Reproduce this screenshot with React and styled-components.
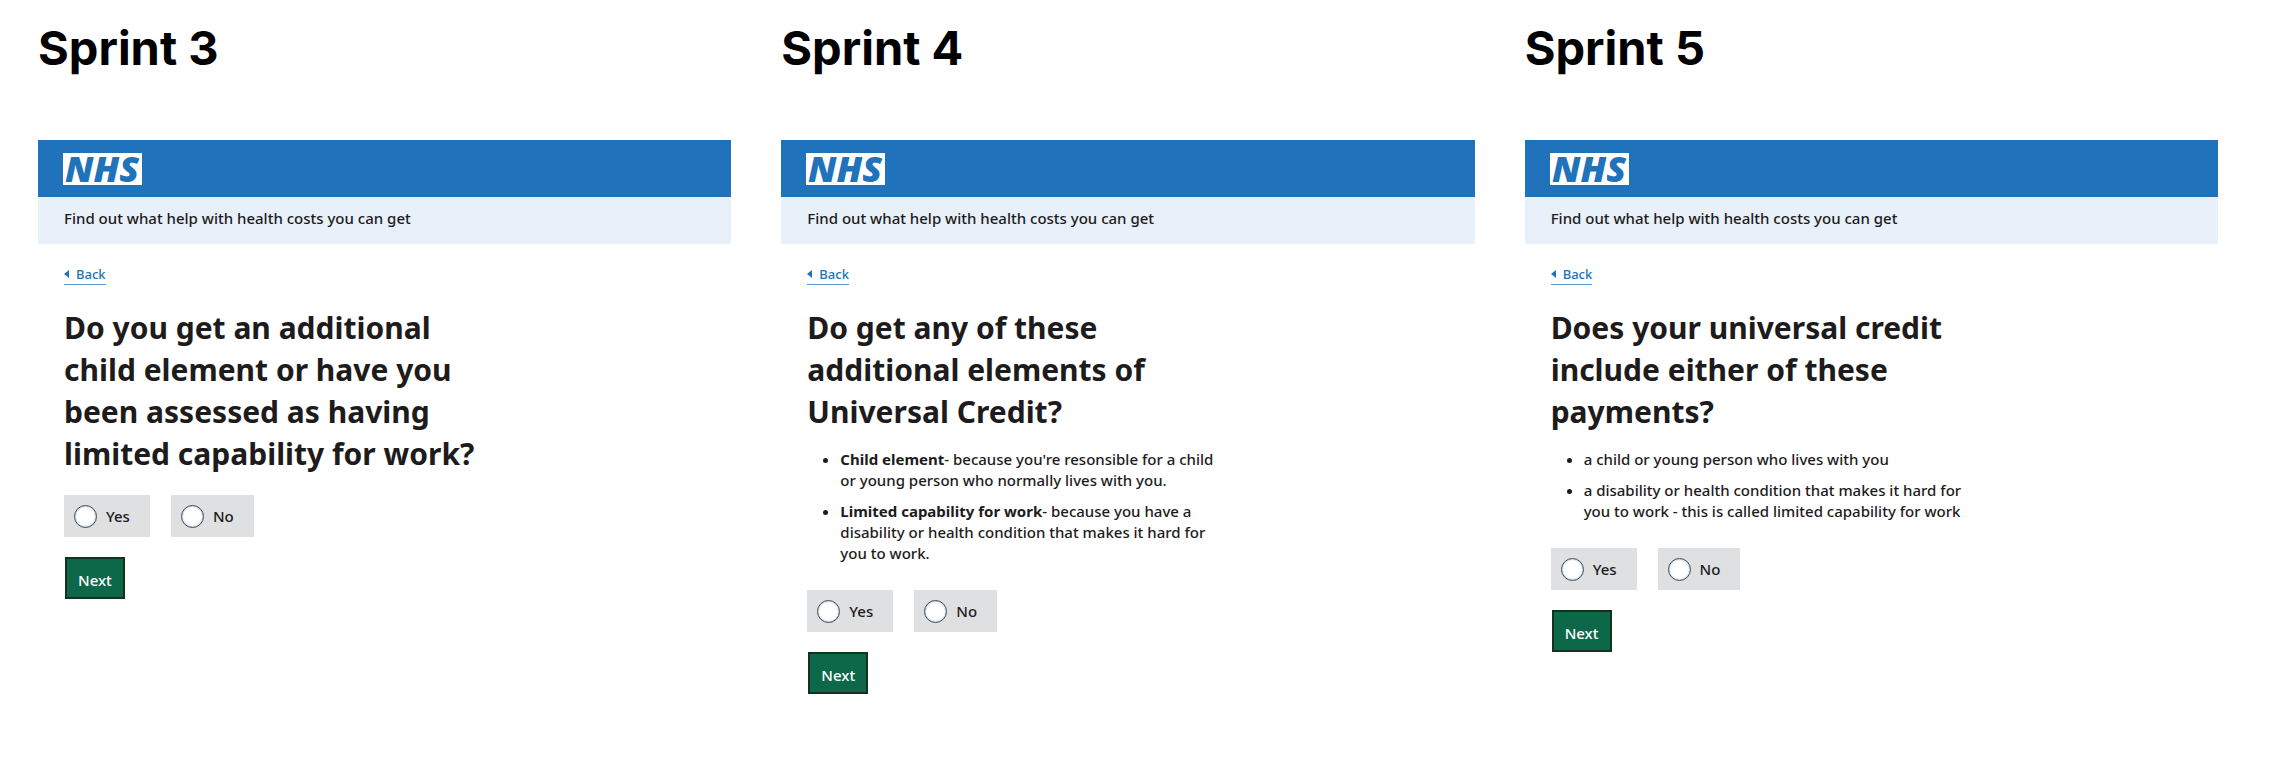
import React from 'react';
import styled, { createGlobalStyle } from 'styled-components';

const blue = '#2073bb';
const ink = '#1d1b1c';

const GlobalStyle = createGlobalStyle`
  *, *::before, *::after { box-sizing: border-box; }
  body {
    margin: 0;
    background: #fff;
    color: ${ink};
    font: 500 15px/24px 'Noto Sans', 'Open Sans', sans-serif;
  }
`;

const Board = styled.div`
  display: grid;
  grid-template-columns: repeat(3, minmax(0, 1fr));
  gap: 50px;
  padding: 20px 62px 80px 38px;
`;

const SprintTitle = styled.h2`
  margin: 0 0 64px;
  color: #000;
  font: 700 47px/56px Inter, sans-serif;
`;

const Header = styled.header`
  display: flex;
  padding: 13px 25px 12px;
  background: ${blue};
`;

const LogoSvg = styled.svg`
  display: block;
  width: 79px;
  height: 32px;
  overflow: visible;
  background: #fff;

  text {
    fill: ${blue};
    font: italic 800 36px 'Open Sans', sans-serif;
  }
`;

const ServiceName = styled.p`
  margin: 0;
  padding: 9px 26px 14px;
  background: #e8f0fa;
`;

const Main = styled.main`
  display: flex;
  flex-direction: column;
  align-items: flex-start;
  padding: 20px 26px;
`;

const BackLink = styled.a`
  display: inline-flex;
  align-items: center;
  gap: 7px;
  border-bottom: 1px solid #5b9bd3;
  color: ${blue};
  font-size: 13px;
  line-height: 20px;
  text-decoration: none;
`;

const Question = styled.h1`
  max-width: 420px;
  margin: 22px 0 0;
  font-size: 30px;
  font-weight: 700;
  line-height: 42px;
`;

const HintList = styled.ul`
  display: flex;
  flex-direction: column;
  gap: 10px;
  max-width: 420px;
  margin: 16px 0 6px;
  padding: 0 0 0 33px;
  line-height: 21px;

  strong { font-weight: 700; }
`;

const Form = styled.form`
  margin-top: 20px;
`;

const Options = styled.fieldset`
  display: flex;
  gap: 21px;
  margin: 0;
  padding: 0;
  border: 0;
`;

const Option = styled.label`
  display: flex;
  align-items: center;
  gap: 9px;
  height: 42px;
  padding: 0 20px 0 10px;
  background: #dee0e2;
`;

const Radio = styled.input`
  appearance: none;
  width: 23px;
  height: 23px;
  margin: 0;
  border: 1px solid #3f4b55;
  border-radius: 50%;
  background: #fff;
  box-shadow: inset 0 0 2px #5f9cc4;

  &:checked { background: radial-gradient(${ink} 0 5px, #fff 6px); }
`;

const NextButton = styled.button`
  display: block;
  height: 42px;
  margin: 20px 0 0 1px;
  padding: 4px 11px 0;
  border: 2px solid #15331c;
  background: #0c6849;
  color: #fff;
  font: inherit;
  line-height: 20px;
`;

function Logo() {
  return (
    <LogoSvg viewBox="0 0 79 32" role="img" aria-label="NHS">
      <text x="39" y="29" textAnchor="middle">NHS</text>
    </LogoSvg>
  );
}

const sprints = [
  {
    id: 3,
    question: 'Do you get an additional child element or have you been assessed as having limited capability for work?',
  },
  {
    id: 4,
    question: 'Do get any of these additional elements of Universal Credit?',
    hints: [
      { term: 'Child element', text: "- because you're resonsible for a child or young person who normally lives with you." },
      {
        term: 'Limited capability for work',
        text: '- because you have a disability or health condition that makes it hard for you to work.',
      },
    ],
  },
  {
    id: 5,
    question: 'Does your universal credit include either of these payments?',
    hints: [
      { text: 'a child or young person who lives with you' },
      {
        text: 'a disability or health condition that makes it hard for you to work - this is called limited capability for work',
      },
    ],
  },
];

function Sprint({ id, question, hints }) {
  return (
    <section>
      <SprintTitle>Sprint {id}</SprintTitle>
      <Header>
        <Logo />
      </Header>
      <ServiceName>Find out what help with health costs you can get</ServiceName>
      <Main>
        <BackLink href="#">
          <svg width="5" height="8" viewBox="0 0 5 8" aria-hidden="true">
            <path d="M5 0v8L0 4z" fill="currentColor" />
          </svg>
          Back
        </BackLink>
        <Question id={`question-${id}`}>{question}</Question>
        {hints && (
          <HintList>
            {hints.map((hint) => (
              <li key={hint.text}>
                {hint.term && <strong>{hint.term}</strong>}
                {hint.text}
              </li>
            ))}
          </HintList>
        )}
        <Form onSubmit={(event) => event.preventDefault()}>
          <Options aria-labelledby={`question-${id}`}>
            {['Yes', 'No'].map((answer) => (
              <Option key={answer}>
                <Radio type="radio" name={`answer-${id}`} value={answer} />
                {answer}
              </Option>
            ))}
          </Options>
          <NextButton type="submit">Next</NextButton>
        </Form>
      </Main>
    </section>
  );
}

export default function App() {
  return (
    <>
      <GlobalStyle />
      <Board>
        {sprints.map((sprint) => (
          <Sprint key={sprint.id} {...sprint} />
        ))}
      </Board>
    </>
  );
}
